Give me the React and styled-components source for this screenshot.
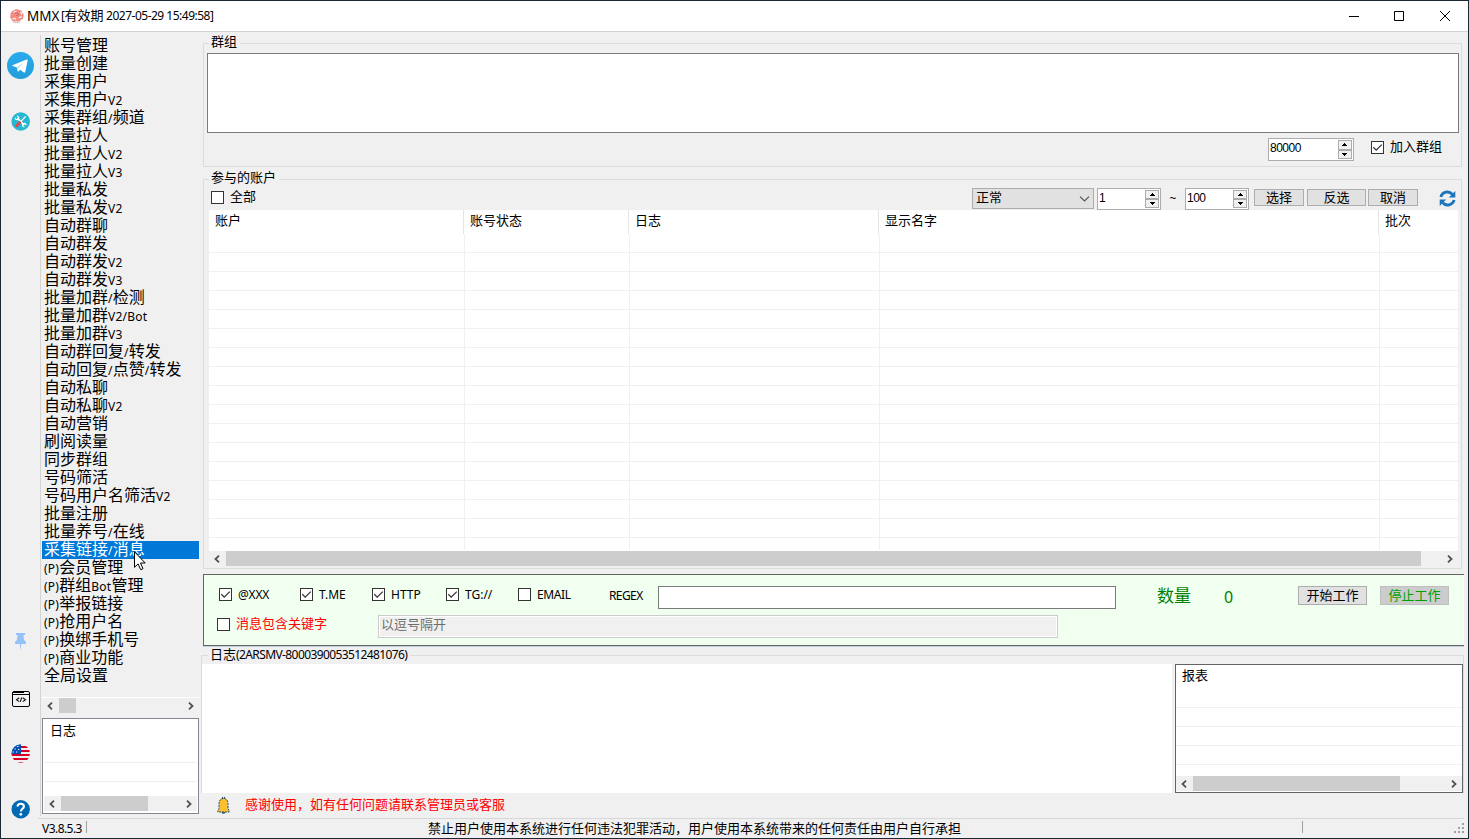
import React from 'react';
import styled, { createGlobalStyle, css } from 'styled-components';

const GlobalStyle = createGlobalStyle`
  * { box-sizing: border-box; }
  html, body { margin: 0; padding: 0; background: #f0f0f0; overflow: hidden; }
  body { font-family: "Noto Sans CJK SC", "Noto Sans", sans-serif; font-size: 13px; color: #000; }
  svg { display: block; flex: none; }
`;

const Window = styled.div`
  width: 1469px;
  height: 839px;
  display: flex;
  flex-direction: column;
  background: #f0f0f0;
  border: 1px solid #1b2737;
  white-space: nowrap;
`;

/* ---------- text ---------- */
const LatinRun = styled.span`
  font-family: "Noto Sans", "Open Sans", sans-serif;
  font-size: ${p => p.$size || 12}px;
  letter-spacing: ${p => p.$ls || 0}px;
`;

function Mixed({ text, size, ls }) {
  return text.split(/([\x20-\x7e]+)/).filter(Boolean).map((run, i) =>
    /^[\x20-\x7e]/.test(run)
      ? <LatinRun key={i} $size={size} $ls={ls}>{run}</LatinRun>
      : <React.Fragment key={i}>{run}</React.Fragment>
  );
}

/* ---------- title bar ---------- */
const TitleBar = styled.header`
  height: 31px;
  flex: none;
  display: flex;
  align-items: center;
  padding-left: 8px;
  background: #fff;
  border-bottom: 1px solid #d2d2d2;
`;
const AppName = styled.span`
  width: 34px;
  margin-left: 2px;
  font: 13.5px/28px "Noto Sans", sans-serif;
`;
const TitleText = styled.span`
  flex: 1;
  height: 28px;
  line-height: 26px;
`;
const WindowButton = styled.span`
  width: 46px;
  height: 30px;
  padding-left: ${p => p.$inset || 0}px;
  display: grid;
  place-items: center;
`;

/* ---------- rail ---------- */
const Body = styled.div`
  flex: 1;
  min-height: 0;
  display: flex;
`;
const Rail = styled.nav`
  width: 40px;
  height: 781px;
  margin-top: 3px;
  border-right: 1px solid #d4d4d4;
  display: flex;
  flex-direction: column;
  align-items: center;
`;
const RailSlot = styled.div`
  height: ${p => p.$h}px;
  width: 39px;
  flex: none;
  margin-top: ${p => p.$top}px;
  display: grid;
  place-items: center;
`;

/* ---------- sidebar ---------- */
const Sidebar = styled.aside`
  width: 157px;
  flex: none;
  margin: 5px 0 0 1px;
  display: flex;
  flex-direction: column;
`;
const Menu = styled.ul`
  list-style: none;
  margin: 0;
  padding: 0;
  height: 661px;
  border-bottom: 1px solid #fff;
`;
const MenuItem = styled.li`
  height: 18px;
  line-height: 14px;
  padding-left: 2px;
  font-size: 16px;
  ${p => p.$active && css`background: #0078d7; color: #fff;`}
`;

/* ---------- scroll bar ---------- */
const ScrollTrack = styled.div`
  height: 15px;
  flex: none;
  display: flex;
  align-items: center;
  background: #f0f0f0;
`;
const ScrollThumb = styled.div`
  height: 15px;
  width: ${p => p.$w}px;
  background: #cdcdcd;
`;
const ScrollArrow = styled.span`
  width: 17px;
  display: grid;
  place-items: center;
  &:first-child { padding-right: 2px; }
  &:last-child { margin-left: auto; }
`;
const Chevron = ({ right }) => (
  <svg width="6" height="8" viewBox="0 0 6 8">
    <path d={right ? 'M1 .7L4.5 4 1 7.3' : 'M5 .7L1.5 4 5 7.3'} fill="none" stroke="#505050" strokeWidth="1.8" />
  </svg>
);
function HScroll({ thumb }) {
  return (
    <ScrollTrack>
      <ScrollArrow><Chevron /></ScrollArrow>
      <ScrollThumb $w={thumb} />
      <ScrollArrow><Chevron right /></ScrollArrow>
    </ScrollTrack>
  );
}

/* ---------- small lists ---------- */
const ListBox = styled.div`
  width: ${p => p.$w}px;
  height: ${p => p.$h}px;
  flex: none;
  margin-top: ${p => p.$top || 0}px;
  padding: ${p => p.$pad};
  border: 1px solid ${p => p.$line};
  background: #fff;
  display: flex;
  flex-direction: column;
`;
const ListHead = styled.div`
  height: 24px;
  line-height: 20px;
  padding-left: ${p => p.$left}px;
`;
const ListRow = styled.div`
  height: 19px;
  border-bottom: 1px solid #f0f0f0;
`;
const Fill = styled.div`flex: 1;`;

/* ---------- main ---------- */
const Main = styled.main`
  margin-left: 2px;
  flex: 1;
  padding-top: 4px;
  display: flex;
  flex-direction: column;
`;
const GroupBox = styled.fieldset`
  margin: ${p => p.$m};
  padding: 0;
  min-width: 0;
  width: ${p => p.$w}px;
  height: ${p => p.$h}px;
  flex: none;
  border: 1px solid #dcdcdc;
  ${p => p.$open && css`border-bottom: 0;`}
`;
const Legend = styled.legend`
  margin-left: ${p => p.$left || 5}px;
  padding: 0 3px 0 2px;
  height: 15px;
  line-height: ${p => p.$lh || 9}px;
`;
const GroupInput = styled.div`
  height: 80px;
  margin: 2px 2px 0 3px;
  border: 1px solid #7a7a7a;
  background: #fff;
`;
const GroupOptions = styled.div`
  display: flex;
  justify-content: flex-end;
  align-items: flex-start;
  padding: 5px 19px 0 0;
`;
const SpinFrame = styled.div`
  width: ${p => p.$w}px;
  height: ${p => p.$h}px;
  padding: 1px;
  border: 1px solid #abadb3;
  background: #fff;
  display: flex;
  justify-content: space-between;
  font: 12px/16px "Liberation Sans", Arial, sans-serif;
  letter-spacing: -0.5px;
`;
const SpinButtons = styled.span`
  display: flex;
  flex-direction: column;
  background: #f0f0f0;
`;
const SpinButton = styled.span`
  width: 14px;
  flex: 1;
  border: 1px solid #acacac;
  display: grid;
  place-items: center;
`;
const Triangle = ({ down }) => (
  <svg width="5" height="3" viewBox="0 0 5 3" shapeRendering="crispEdges">
    <path d={down ? 'M0 0h5v1h-1v1h-1v1h-1v-1h-1v-1h-1z' : 'M2 0h1v1h1v1h1v1h-5v-1h1v-1h1z'} />
  </svg>
);
function Spin({ value, w, h }) {
  return (
    <SpinFrame $w={w} $h={h}>
      <span>{value}</span>
      <SpinButtons>
        <SpinButton><Triangle /></SpinButton>
        <SpinButton><Triangle down /></SpinButton>
      </SpinButtons>
    </SpinFrame>
  );
}

const CheckLabel = styled.label`
  display: flex;
  width: ${p => (p.$w ? p.$w + 'px' : 'auto')};
  height: 13px;
  flex: none;
  margin: ${p => p.$m || 0};
  gap: 6px;
  line-height: ${p => p.$lh || 10}px;
  color: ${p => p.$color || '#000'};
`;
const Tick = styled.span`
  width: 13px;
  height: 13px;
  border: 1px solid #333;
  background: #fff;
`;
function Check({ checked, text, w, m, color, ls, lh }) {
  return (
    <CheckLabel $w={w} $m={m} $color={color} $lh={lh}>
      <Tick>
        {checked && (
          <svg width="11" height="11" viewBox="0 0 11 11">
            <path d="M1.3 5.3l2.9 2.9 5.6-5.6" fill="none" stroke="#333" strokeWidth="1.3" />
          </svg>
        )}
      </Tick>
      <span><Mixed text={text} ls={ls} /></span>
    </CheckLabel>
  );
}

const Toolbar = styled.div`
  height: 22px;
  margin-top: 1px;
  padding-left: 7px;
  display: flex;
  align-items: flex-start;
`;
const Select = styled.div`
  width: 122px;
  height: 21px;
  margin: 0 3px 0 auto;
  padding: 0 3px;
  border: 1px solid #acacac;
  background: #e1e1e1;
  display: flex;
  justify-content: space-between;
  line-height: 16px;
  svg { margin-top: 7px; }
`;
const Tilde = styled.span`
  width: 24px;
  text-align: center;
  font: 12px/22px "Noto Sans", sans-serif;
`;
const Button = styled.button`
  width: ${p => p.$w}px;
  height: ${p => p.$h}px;
  margin: ${p => p.$m};
  padding: 0;
  border: 1px solid ${p => (p.$off ? '#bfbfbf' : '#adadad')};
  background: ${p => (p.$off ? '#cccccc' : '#e1e1e1')};
  color: ${p => (p.$off ? '#00a000' : '#000')};
  font: 13px/${p => p.$lh || 14}px "Noto Sans CJK SC", sans-serif;
  display: flex;
  justify-content: center;
`;
const RefreshSlot = styled.span`
  width: 17px;
  margin: 2px 5px 0 0;
`;

/* ---------- table ---------- */
const Table = styled.div`
  width: 1249px;
  height: 341px;
  margin-left: 5px;
  background: #fff;
  display: flex;
  flex-direction: column;
`;
const HeadRow = styled.div`
  height: 24px;
  flex: none;
  display: grid;
  grid-template-columns: 255px 165px 250px 500px 1fr;
`;
const HeadCell = styled.div`
  padding-left: 6px;
  line-height: 20px;
  border-right: 1px solid #e5e5e5;
  &:last-child { border-right: 0; }
`;
const Row = styled.div`
  height: ${p => (p.$last ? 12 : 19)}px;
  flex: none;
  display: grid;
  grid-template-columns: 256px 165px 250px 500px 1fr;
  border-bottom: ${p => (p.$last ? 0 : 1)}px solid #f0f0f0;
`;
const Cell = styled.div`
  border-right: 1px solid #f0f0f0;
  &:last-child { border-right: 0; }
`;
const TableScroll = styled.div`
  width: 1249px;
  margin-left: 5px;
`;

/* ---------- work panel ---------- */
const WorkPanel = styled.section`
  width: 1261px;
  height: 72px;
  flex: none;
  margin: 5px 0 1px 2px;
  border: solid #646464;
  border-width: 1px 0 1px 1px;
  background: #f0fff0;
  box-shadow: 0 1px 0 #c3cfdd;
`;
const FilterRow = styled.div`
  height: 40px;
  padding: 11px 0 0 15px;
  display: flex;
  align-items: flex-start;
`;
const KeywordRow = styled.div`
  display: flex;
  align-items: flex-start;
  padding-left: 13px;
`;
const RegexLabel = styled.span`
  width: 49px;
  font: 12px/20px "Noto Sans", sans-serif;
  letter-spacing: -0.6px;
`;
const RegexInput = styled.div`
  width: 458px;
  height: 23px;
  border: 1px solid #7a7a7a;
  background: #fff;
`;
const Count = styled.span`
  width: ${p => p.$w}px;
  margin-left: ${p => p.$left || 0}px;
  font-size: ${p => p.$size}px;
  line-height: ${p => (p.$latin ? 22 : 18)}px;
  font-family: ${p => (p.$latin ? '"Noto Sans", sans-serif' : 'inherit')};
  color: #008000;
`;
const KeywordInput = styled.div`
  width: 680px;
  height: 23px;
  margin-left: auto;
  margin-right: 406px;
  padding-left: 2px;
  border: 1px solid #cccccc;
  box-shadow: inset 0 0 0 1px #fff;
  background: #f0f0f0;
  color: #6d6d6d;
  line-height: 16px;
`;

/* ---------- bottom ---------- */
const LogArea = styled.div`
  display: flex;
  margin-top: 1px;
  height: 129px;
`;
const LogView = styled.div`
  width: 970px;
  margin-right: 3px;
  background: #fff;
`;
const Notice = styled.div`
  height: 25px;
  padding-left: 16px;
  display: flex;
  align-items: center;
  gap: 15px;
  color: #ff0000;
  line-height: 22px;
  span { height: 25px; }
`;
const StatusBar = styled.footer`
  height: 20px;
  flex: none;
  margin: 0 4px 0 37px;
  padding-left: 4px;
  border-top: 1px solid #d7d7d7;
  display: flex;
  align-items: flex-start;
  line-height: 17px;
`;
const Divider = styled.i`
  width: 1px;
  height: 12px;
  margin-top: 2px;
  background: #a0a0a0;
`;
const Version = styled.span`width: 44px;`;
const Warning = styled.span`
  width: 874px;
  margin-left: 341px;
`;
const Grip = styled.span`margin: 4px 0 0 auto;`;

const Pointer = styled.div`
  position: absolute;
  left: 134px;
  top: 551px;
`;

/* ---------- icons ---------- */
const LogoIcon = () => (
  <svg width="16" height="16" viewBox="0 0 16 16">
    <path d="M4.500 2.500C6.500.6 9 1 10 2c2-.3 3.200 1 3 2.600 1.600.9 2.200 2.600 1.300 4.200.2 1.800-1 3-2.600 3.100-.7 1.500-2.500 2-4 1.500-2.500.6-4.700-.2-5-2C1.200 10.300.600 8.500 1.500 7 1.200 5 2.500 3.300 4.500 2.500z" fill="#f08d85" />
    <path d="M11 4.200c1.500.3 2 1.500 1.600 2.600M3.600 11c1.400-1 2.600-.6 3.400.4M9.800 9.200c1.300.5 2.300 0 2.700-1M7.500 3.800c-1-.6-2.200-.3-2.700.7" fill="none" stroke="#fff4f2" strokeWidth="1.100" />
    <path d="M5.300 5.800c1.200-1.600 3.800-1.400 4.200.3.200 1.500-1.300 2-2.200 1.200" fill="none" stroke="#d2605b" strokeWidth="1" />
    <path d="M3.500 13.600c2 1.400 6 1.400 8 .3" fill="none" stroke="#cdc2c0" strokeWidth="1" />
  </svg>
);
const TelegramIcon = () => (
  <svg width="27" height="27" viewBox="0 0 27 27">
    <defs><linearGradient id="tg" x2="0" y2="1"><stop stopColor="#2aabee" /><stop offset="1" stopColor="#229ed9" /></linearGradient></defs>
    <circle cx="13.500" cy="13.500" r="13.500" fill="url(#tg)" />
    <path d="M5.500 13.300L19.500 7.600c.8-.3 1.300.2 1.100 1.100l-2.300 11c-.2.900-.8 1.100-1.500.7l-3.600-2.700-1.800 1.700c-.4.400-.9.200-.9-.3l-.7-3.700-4.200-1.300c-.7-.2-.7-.6-.1-.8z" fill="#fff" />
    <path d="M9.900 15.300l7.300-4.800-5.700 5.700-.5 2.900z" fill="#b9dff3" />
  </svg>
);
const ToolsIcon = () => (
  <svg width="19" height="19" viewBox="0 0 19 19">
    <circle cx="9.700" cy="9.500" r="9.300" fill="#26b7d3" />
    <path d="M6.300 6.100l7 7" stroke="#fff" strokeWidth="1.500" />
    <path d="M4.300 5.800a1.700 1.700 0 1 0 1.600-1.600M15 13.200a1.700 1.700 0 1 0-1.600 1.600" fill="none" stroke="#fff" strokeWidth="1.200" />
    <path d="M9.500 9.800l4-4.300 1.300-1" fill="none" stroke="#fff" strokeWidth="1.200" />
    <path d="M5.700 13.800l3-3.200" stroke="#e5484a" strokeWidth="2.800" strokeLinecap="round" />
  </svg>
);
const PinIcon = () => (
  <svg width="13" height="18" viewBox="0 0 13 18">
    <path d="M2 0h9v2H9.500l.5 5 2 1.700V11H7.200l-.7 7-.7-7H1V8.700L3 7l.5-5H2z" fill="#96c2fb" />
  </svg>
);
const CodeIcon = () => (
  <svg width="18" height="17" viewBox="0 0 18 17">
    <rect x=".5" y=".5" width="17" height="15" rx="1.500" fill="#f3f3f3" stroke="#000" />
    <path d="M1 1h11v1H1zM1 3h16v1H1z" fill="#000" />
    <path d="M7.200 6.800L4.500 8.700l2.700 1.900M10.800 6.800l2.700 1.900-2.700 1.900M9.700 6.500l-1.400 4.400" fill="none" stroke="#111" strokeWidth="1.100" />
  </svg>
);
const FlagIcon = () => (
  <svg width="19" height="19" viewBox="0 0 19 19">
    <defs><clipPath id="disc"><circle cx="9.700" cy="9.500" r="9.300" /></clipPath></defs>
    <g clipPath="url(#disc)">
      <path fill="#f0f0f0" d="M0 0h19v19H0z" />
      <path fill="#d80027" d="M9 2h10v2H9zM9 6h10v2H9zM0 10h19v2H0zM0 14h19v2H0zM0 18h19v1H0z" />
      <path fill="#0052b4" d="M0 0h10v10H0z" />
      <path d="M6 2.500h1.500M3.500 5h1.300M7 5.500h1.300M1.500 8h1.300M5 8h1.300" stroke="#f0f0f0" strokeWidth="1.200" />
    </g>
  </svg>
);
const HelpIcon = () => (
  <svg width="19" height="19" viewBox="0 0 19 19">
    <circle cx="9.700" cy="9.300" r="9.200" fill="#0069b4" />
    <path d="M6.500 6.500C6.600 4.600 7.900 3.700 9.700 3.700c2 0 3.200 1.100 3.200 2.700 0 2.400-3 2.400-3 5" fill="none" stroke="#fff" strokeWidth="2.100" />
    <circle cx="9.800" cy="14.300" r="1.400" fill="#fff" />
  </svg>
);
const RefreshIcon = () => (
  <svg width="17" height="17" viewBox="0 0 17 17">
    <path d="M1.800 7A6.700 6.700 0 0 1 13.300 4.300M15.200 10A6.700 6.700 0 0 1 3.700 12.700" fill="none" stroke="#1c75bc" strokeWidth="2.800" />
    <path d="M16.300 1v6.500H9.800zM.7 16V9.500h6.500z" fill="#1c75bc" />
  </svg>
);
const BellIcon = () => (
  <svg width="13" height="17" viewBox="0 0 13 17">
    <path d="M5.500 0v2M7.500 0v2" stroke="#123e68" />
    <path d="M6.500 1.500C3.500 1.500 2 3.800 2 6.500v5L.8 14v1h11.400v-1L11 11.500v-5c0-2.700-1.500-5-4.500-5z" fill="#fcc02e" stroke="#123e68" strokeWidth=".9" strokeDasharray="2 .9" />
    <path d="M4.800 15.500c.4 1.300 3 1.300 3.400 0z" fill="#6a7c66" stroke="#123e68" strokeWidth=".6" />
  </svg>
);

const railItems = [
  { Icon: TelegramIcon, top: 17, h: 27 },
  { Icon: ToolsIcon, top: 33, h: 19 },
  { Icon: PinIcon, top: 502, h: 18 },
  { Icon: CodeIcon, top: 40, h: 17 },
  { Icon: FlagIcon, top: 36, h: 19 },
  { Icon: HelpIcon, top: 37, h: 19 },
];

const menu = [
  '账号管理', '批量创建', '采集用户', '采集用户V2', '采集群组/频道', '批量拉人', '批量拉人V2', '批量拉人V3',
  '批量私发', '批量私发V2', '自动群聊', '自动群发', '自动群发V2', '自动群发V3', '批量加群/检测', '批量加群V2/Bot',
  '批量加群V3', '自动群回复/转发', '自动回复/点赞/转发', '自动私聊', '自动私聊V2', '自动营销', '刷阅读量', '同步群组',
  '号码筛活', '号码用户名筛活V2', '批量注册', '批量养号/在线', '采集链接/消息', '(P)会员管理', '(P)群组Bot管理',
  '(P)举报链接', '(P)抢用户名', '(P)换绑手机号', '(P)商业功能', '全局设置',
];

const columns = ['账户', '账号状态', '日志', '显示名字', '批次'];
const filters = [
  { text: '@XXX', w: 81, checked: true, ls: -0.2 },
  { text: 'T.ME', w: 72, checked: true, ls: 0 },
  { text: 'HTTP', w: 74, checked: true, ls: 0 },
  { text: 'TG://', w: 72, checked: true, ls: 0 },
  { text: 'EMAIL', w: 91, checked: false, ls: -0.4 },
];

export default function App() {
  return (
    <Window>
      <GlobalStyle />
      <TitleBar>
        <LogoIcon />
        <AppName>MMX</AppName>
        <TitleText><Mixed text="[有效期 2027-05-29 15:49:58]" ls={-0.5} /></TitleText>
        <WindowButton $inset={2}><svg width="10" height="10"><path d="M0 5.500h10" stroke="#000" /></svg></WindowButton>
        <WindowButton><svg width="10" height="10"><path d="M.5.500h9v9h-9z" fill="none" stroke="#000" /></svg></WindowButton>
        <WindowButton><svg width="10" height="10"><path d="M0 0l10 10M10 0L0 10" stroke="#000" /></svg></WindowButton>
      </TitleBar>

      <Body>
        <Rail>
          {railItems.map(({ Icon, top, h }, i) => (
            <RailSlot key={i} $top={top} $h={h}><Icon /></RailSlot>
          ))}
        </Rail>

        <Sidebar>
          <Menu>
            {menu.map(item => (
              <MenuItem key={item} $active={item === '采集链接/消息'}><Mixed text={item} ls={0.25} /></MenuItem>
            ))}
          </Menu>
          <HScroll thumb={17} />
          <ListBox $w={157} $h={96} $top={5} $pad="1px 1px 2px" $line="#828790">
            <ListHead $left={6}>日志</ListHead>
            <ListRow />
            <ListRow />
            <Fill />
            <HScroll thumb={87} />
          </ListBox>
        </Sidebar>

        <Main>
          <GroupBox $m="0 0 0 2px" $w={1259} $h={131}>
            <Legend>群组</Legend>
            <GroupInput />
            <GroupOptions>
              <Spin value="80000" w={86} h={23} />
              <Check checked text="加入群组" m="3px 0 0 17px" />
            </GroupOptions>
          </GroupBox>

          <GroupBox $m="5px 0 0 2px" $w={1259} $h={397}>
            <Legend>参与的账户</Legend>
            <Toolbar>
              <Check text="全部" m="3px 0 0" />
              <Select>
                正常
                <svg width="11" height="6" viewBox="0 0 11 6"><path d="M1 .7l4.500 4.300L10 .7" fill="none" stroke="#505050" strokeWidth="1.100" /></svg>
              </Select>
              <Spin value="1" w={64} h={22} />
              <Tilde>~</Tilde>
              <Spin value="100" w={64} h={22} />
              <Button $w={50} $h={17} $m="1px 0 0 5px">选择</Button>
              <Button $w={59} $h={17} $m="1px 0 0 3px">反选</Button>
              <Button $w={50} $h={17} $m="1px 21px 0 2px">取消</Button>
              <RefreshSlot><RefreshIcon /></RefreshSlot>
            </Toolbar>
            <Table>
              <HeadRow>{columns.map(c => <HeadCell key={c}>{c}</HeadCell>)}</HeadRow>
              {Array.from({ length: 17 }, (_, i) => (
                <Row key={i} $last={i === 16}>{columns.map(c => <Cell key={c} />)}</Row>
              ))}
            </Table>
            <TableScroll><HScroll thumb={1195} /></TableScroll>
          </GroupBox>

          <WorkPanel>
            <FilterRow>
              {filters.map(f => (
                <Check key={f.text} {...f} m="2px 0 0" lh={12} />
              ))}
              <RegexLabel>REGEX</RegexLabel>
              <RegexInput />
              <Count $left={41} $w={67} $size={17}>数量</Count>
              <Count $w={74} $size={16} $latin>0</Count>
              <Button $w={69} $h={19} $m="0" $lh={16}>开始工作</Button>
              <Button $w={69} $h={19} $m="0 0 0 13px" $lh={16} $off>停止工作</Button>
            </FilterRow>
            <KeywordRow>
              <Check text="消息包含关键字" m="3px 0 0" color="#ff0000" />
              <KeywordInput>以逗号隔开</KeywordInput>
            </KeywordRow>
          </WorkPanel>

          <GroupBox $m="1px 0 0" $w={1263} $h={145} $open>
            <Legend $left={6} $lh={11}><Mixed text="日志(2ARSMV-8000390053512481076)" ls={-0.6} /></Legend>
            <LogArea>
              <LogView />
              <ListBox $w={288} $h={129} $pad="0 0 1px" $line="#646464">
                <ListHead $left={6}>报表</ListHead>
                <ListRow />
                <ListRow />
                <ListRow />
                <ListRow />
                <Fill />
                <HScroll thumb={207} />
              </ListBox>
            </LogArea>
          </GroupBox>
          <Notice><BellIcon /><span>感谢使用，如有任何问题请联系管理员或客服</span></Notice>
        </Main>
      </Body>

      <StatusBar>
        <Version><Mixed text="V3.8.5.3" ls={-0.55} /></Version>
        <Divider />
        <Warning>禁止用户使用本系统进行任何违法犯罪活动，用户使用本系统带来的任何责任由用户自行承担</Warning>
        <Divider />
        <Grip>
          <svg width="10" height="10" shapeRendering="crispEdges">
            <path d="M8 0h2v2h-2zM4 4h2v2h-2zM8 4h2v2h-2zM0 8h2v2h-2zM4 8h2v2h-2zM8 8h2v2h-2z" fill="#a0a0a0" />
          </svg>
        </Grip>
      </StatusBar>

      <Pointer>
        <svg width="12" height="20" viewBox="0 0 12 20">
          <path d="M.5.800v15.500l3.600-3.400 2.600 5.800 2.300-1-2.500-5.700h4.700z" fill="#fff" stroke="#000" />
        </svg>
      </Pointer>
    </Window>
  );
}
